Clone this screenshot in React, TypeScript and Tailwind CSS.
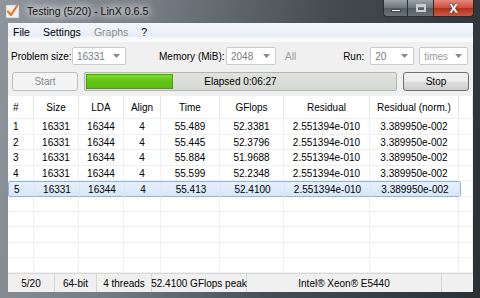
import React from "react";

const rows = [
  ["1", "16331", "16344", "4", "55.489", "52.3381", "2.551394e-010", "3.389950e-002"],
  ["2", "16331", "16344", "4", "55.445", "52.3796", "2.551394e-010", "3.389950e-002"],
  ["3", "16331", "16344", "4", "55.884", "51.9688", "2.551394e-010", "3.389950e-002"],
  ["4", "16331", "16344", "4", "55.599", "52.2348", "2.551394e-010", "3.389950e-002"],
  ["5", "16331", "16344", "4", "55.413", "52.4100", "2.551394e-010", "3.389950e-002"],
];
const headers = ["#", "Size", "LDA", "Align", "Time", "GFlops", "Residual", "Residual (norm.)"];
const rowH = ["h-[16px]", "h-[15px]", "h-[16px]", "h-[15px]", "h-[16px]", "h-[15px]", "h-[15px]", "h-[16px]", "h-[15px]", "h-[15px]"];
const COLS = "grid grid-cols-[26px_45px_45px_37px_59px_64px_86px_89px]";

function Arrow() {
  return (
    <svg width="7" height="4" viewBox="0 0 7 4" className="shrink-0">
      <path d="M0 0h7L3.5 4z" fill="#8a8a8a" />
    </svg>
  );
}

function Combo({ w, text, light }: { w: string; text: string; light?: boolean }) {
  return (
    <div className={`${w} h-[18px] flex items-center justify-between bg-white border border-[#c9cbcf] rounded-[2px] pl-[4px] pr-[5px]`}>
      <span className={light ? "text-[#9a9a9a]" : "text-[#7a7a7a]"}>{text}</span>
      <Arrow />
    </div>
  );
}

function AppIcon() {
  return (
    <svg width="15" height="15" viewBox="0 0 15 15">
      <rect x="0.5" y="0.5" width="14" height="14" rx="1.5" fill="#d9dde2" stroke="#8f979f" />
      <rect x="2" y="2" width="11" height="11" fill="#eef0f2" />
      <path d="M3 7.5l3 3.5 6-9" fill="none" stroke="#e8751f" strokeWidth="2.2" strokeLinecap="round" strokeLinejoin="round" />
    </svg>
  );
}

export default function App() {
  return (
    <div className="w-[480px] h-[298px] flex flex-col overflow-hidden font-['Liberation_Sans',Arial,sans-serif] text-[10px] text-black bg-[linear-gradient(100deg,#8e959c_0%,#737a81_30%,#454b51_62%,#2b3035_100%)]">
      {/* Title bar */}
      <div className="h-[23px] flex items-start shrink-0">
        <div className="ml-[5px] mt-[4px]">
          <AppIcon />
        </div>
        <div className="ml-[7px] mt-[4px] text-[10.6px] text-[#111] [text-shadow:0_0_6px_#ffffff,0_0_10px_#ffffff,0_0_14px_#ffffff]">
          Testing (5/20) - LinX 0.6.5
        </div>
        <div className="ml-auto mr-[6px] flex h-[18px]">
          <div className="w-[25px] h-[17px] rounded-bl-[4px] border border-[#2b3035] border-t-0 bg-[linear-gradient(#9aa2aa,#6c747c_50%,#555d64_51%,#69727a)] flex items-end justify-center pb-[4px]">
            <div className="w-[10px] h-[3px] bg-white border border-[#444]" />
          </div>
          <div className="w-[25px] h-[17px] border-b border-[#2b3035] bg-[linear-gradient(#9aa2aa,#6c747c_50%,#555d64_51%,#69727a)] flex items-center justify-center">
            <div className="w-[10px] h-[8px] border-[2px] border-[#c9ced3] border-t-[3px]" />
          </div>
          <div className="w-[41px] h-[17px] rounded-br-[4px] border border-[#3a1f1a] border-t-0 bg-[linear-gradient(#e48a7c,#c9503e_50%,#b2301f_51%,#cf5a40)] flex items-center justify-center">
            <span className="text-white font-bold text-[13px] leading-none [text-shadow:0_0_1px_#333,0_0_2px_#333]">X</span>
          </div>
        </div>
      </div>

      <div className="flex flex-1 min-h-0">
        <div className="w-[8px]" />
        {/* Client */}
        <div className="w-[465px] flex flex-col bg-[#f0f0f0]">
          {/* Menu */}
          <div className="h-[19px] flex items-center text-[10.5px] bg-[linear-gradient(#f3f6fb,#e8edf6_75%,#f6f8fc_76%,#f9fbfd)]">
            <span className="ml-[5px]">File</span>
            <span className="ml-[13px]">Settings</span>
            <span className="ml-[13px] text-[#8d8d8d]">Graphs</span>
            <span className="ml-[13px]">?</span>
          </div>
          {/* Controls */}
          <div className="mt-[5px] h-[18px] flex items-center">
            <span className="ml-[3px] w-[61px]">Problem size:</span>
            <Combo w="w-[54px]" text="16331" />
            <span className="ml-[33px] w-[67px]">Memory (MiB):</span>
            <Combo w="w-[50px]" text="2048" />
            <span className="ml-[9px] text-[#9a9a9a]">All</span>
            <span className="ml-[47px] w-[27px]">Run:</span>
            <Combo w="w-[44px]" text="20" />
            <div className="ml-[5px]">
              <Combo w="w-[49px]" text="times" light />
            </div>
          </div>
          {/* Buttons */}
          <div className="mt-[7px] h-[19px] flex items-stretch">
            <div className="ml-[4px] w-[66px] flex items-center justify-center bg-[#f4f4f4] border border-[#b9bec2] rounded-[3px] text-[#8a8a8a]">
              Start
            </div>
            <div className="relative ml-[6px] w-[313px] border border-[#b3b5b0] rounded-[2px] bg-[linear-gradient(#e2e3de,#d6d8d2)] p-[1px] flex">
              <div className="w-[87px] h-full bg-[linear-gradient(#7ed934,#62c412_50%,#5bbd0e)] border border-[#4f9d13]" />
              <div className="absolute inset-0 flex items-center justify-center">Elapsed 0:06:27</div>
            </div>
            <div className="ml-[6px] w-[66px] flex items-center justify-center border border-[#707070] rounded-[3px] bg-[linear-gradient(#f2f2f2,#ebebeb_50%,#dddddd_51%,#cfcfcf)]">
              Stop
            </div>
          </div>
          {/* Table */}
          <div className="mt-[5px] h-[177px] flex flex-col bg-white">
            <div className="h-[23px] flex border-b border-[#eeeeee]">
              <div className={COLS}>
                {headers.map((h, i) => (
                  <div key={i} className={`flex items-center border-r border-[#e3e5e8] ${i === 0 ? "pl-[5px]" : "justify-center"}`}>
                    {h}
                  </div>
                ))}
              </div>
              <div className="w-[14px] border-r border-[#e3e5e8]" />
            </div>
            {rowH.map((hc, r) => {
              const data = rows[r];
              const sel = r === 4;
              return (
                <div key={r} className={`${hc} flex`}>
                  <div className={`${COLS} ${sel ? "bg-[linear-gradient(#e7f0fb,#d6e6f9)] border border-[#8fb4e3] rounded-[2px]" : "border-b border-[#f0f0f0]"}`}>
                    {Array.from({ length: 8 }).map((_, c) => (
                      <div
                        key={c}
                        className={`flex items-center ${sel ? "border-r border-[#dbe6f3]" : "border-r border-[#f0f0f0]"} ${c === 0 ? "pl-[5px]" : "justify-center"}`}
                      >
                        {data ? data[c] : ""}
                      </div>
                    ))}
                  </div>
                  <div className="w-[14px] border-r border-b border-[#f0f0f0]" />
                </div>
              );
            })}
          </div>
          {/* Status bar */}
          <div className="h-[19px] flex border-t border-[#d8d8d8] bg-[#f0f0f0]">
            <div className="w-[47px] flex items-center justify-center border-r border-[#d6d6d6]">5/20</div>
            <div className="w-[42px] flex items-center justify-center border-r border-[#d6d6d6]">64-bit</div>
            <div className="w-[55px] flex items-center justify-center border-r border-[#d6d6d6]">4 threads</div>
            <div className="w-[95px] flex items-center justify-center border-r border-[#d6d6d6] whitespace-nowrap">52.4100 GFlops peak</div>
            <div className="w-[195px] flex items-center justify-center border-r border-[#d6d6d6]">Intel® Xeon® E5440</div>
            <div className="flex-1" />
          </div>
        </div>
        <div className="w-[7px]" />
      </div>
      <div className="h-[6px] shrink-0" />
    </div>
  );
}
